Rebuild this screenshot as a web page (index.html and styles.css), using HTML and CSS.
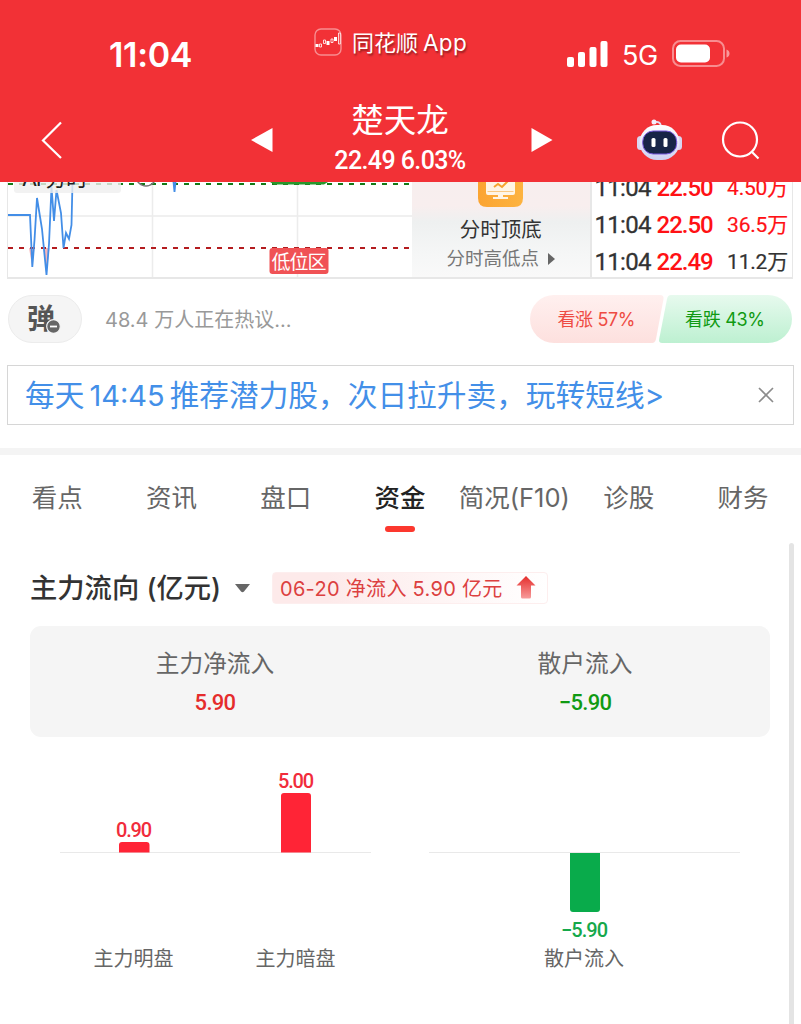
FILE: index.html
```html
<!DOCTYPE html>
<html lang="zh-CN">
<head>
<meta charset="utf-8">
<title>楚天龙 资金</title>
<link rel="stylesheet" href="styles.css">
</head>
<body>
<header class="header">
  <div class="status">
    <span class="clock">11:04</span>
    <div class="brand">
      <svg class="brand-logo" width="28" height="28" viewBox="0 0 28 28" fill="none" stroke="#fff">
        <rect x="1" y="1" width="26" height="26" rx="6" stroke-opacity=".45" stroke-width="1.4"/>
        <path d="M5.500 16h2v3h-2zM9.500 12h2v3.500h-2zM17 11h2v3.500h-2zM24.500 5h1.800v11h-1.800z" stroke-width=".8"/>
        <path d="M3 16v3M14 13v4M21.500 9v4" stroke-width="3"/>
      </svg>
      <span class="brand-name">同花顺<i>App</i></span>
    </div>
    <div class="signal">
      <svg width="42" height="27" viewBox="0 0 42 27" fill="#fff"><rect x="0" y="16" width="7" height="10" rx="2"/><rect x="11" y="11" width="7" height="15" rx="2"/><rect x="22.500" y="6" width="7" height="20" rx="2"/><rect x="33.500" y="0" width="7" height="26" rx="2"/></svg>
      <span class="net">5G</span>
      <svg class="battery" width="59" height="28" viewBox="0 0 59 28"><rect x="1" y="1" width="51" height="25" rx="7.500" fill="none" stroke="#fff" stroke-opacity=".45" stroke-width="2"/><rect x="4" y="4.500" width="34" height="18" rx="5" fill="#fff"/><path d="M54.500 9.500q3 1 3 4t-3 4z" fill="#fff" fill-opacity=".5"/></svg>
    </div>
  </div>
  <nav class="titlebar">
    <svg class="back" width="24" height="40" viewBox="0 0 24 40" fill="none" stroke="#fff" stroke-width="2.200"><path d="M21 2.500 3 20.500 21 38"/></svg>
    <svg class="prev" width="22" height="24" viewBox="0 0 22 24" fill="#fff"><path d="M0 12 21.500 0v24z"/></svg>
    <div class="stock"><h1>楚天龙</h1><p>22.49 6.03%</p></div>
    <svg class="next" width="22" height="24" viewBox="0 0 22 24" fill="#fff"><path d="M21.500 12 .5 0v24z"/></svg>
    <svg class="robot" width="46" height="42" viewBox="0 0 46 42">
      <defs><linearGradient id="shell" x2="0" y2="1"><stop stop-color="#fff"/><stop offset="1" stop-color="#cfd0f2"/></linearGradient></defs>
      <path d="M17 3.500q6-2 7 3.500" fill="none" stroke="#e3def5" stroke-width="1.800"/><circle cx="17" cy="3" r="2.500" fill="#f4eefc"/>
      <rect x="0" y="17" width="7" height="14" rx="3.500" fill="#d9d6f1"/><rect x="38" y="17" width="7" height="14" rx="3.500" fill="#d9d6f1"/>
      <rect x="2.500" y="6" width="40" height="35" rx="17.500" fill="url(#shell)"/>
      <rect x="5.700" y="12" width="34" height="23" rx="10.500" fill="#172447" stroke="#7757dc" stroke-width="1"/>
      <rect x="14.500" y="19" width="4" height="9" rx="1.500" fill="#fff"/><rect x="26.500" y="19" width="4" height="9" rx="1.500" fill="#fff"/>
    </svg>
    <svg class="search" width="40" height="40" viewBox="0 0 40 40" fill="none" stroke="#fff" stroke-width="2.200"><circle cx="19" cy="18.500" r="17"/><path d="m31 31 6.500 6.500"/></svg>
  </nav>
</header>

<section class="market">
  <svg class="trend" width="404" height="97" viewBox="8 182 404 97" fill="none">
    <path d="M8 216H412M152.500 182V279M297.500 182V279" stroke="#ececec" stroke-width="1.500"/>
    <path d="M29 248 32.300 267 34.500 248zM43.500 248 46.500 274 49.500 248z" fill="#f8b6b9"/>
    <path d="M8 184H412" stroke="#147a18" stroke-width="2" stroke-dasharray="5 6"/>
    <path d="M8 248H412" stroke="#b41c1f" stroke-width="2" stroke-dasharray="5 6"/>
    <path d="M8 215H30L32.300 267 34.500 240 37 198 42 229 46.500 275 49 244 51.500 187 54 221 56.500 190 61 213 63.500 248 66 233 69 239 71.500 225 72.500 182M173.500 182l1 10 1-10" stroke="#438ee7" stroke-width="1.800"/>
    <path d="M14 182H121V190q0 3-3 3H17q-3 0-3-3z" fill="#efefef" fill-opacity=".8"/>
    <text x="22" y="185.500" class="trend-tag" textLength="66">AI 分时</text>
    <circle cx="146" cy="176" r="10" stroke="#777" stroke-width="1.500"/>
    <path d="M270 182H328l-4 2.500H274z" fill="#29962d"/>
    <rect x="269.500" y="248" width="59" height="26" rx="3" fill="#f05255"/>
    <text x="299" y="268.500" class="low-zone" text-anchor="middle" textLength="55">低位区</text>
  </svg>
  <div class="promo">
    <svg width="45" height="25" viewBox="0 0 45 25"><defs><linearGradient id="orange"><stop stop-color="#fba431"/><stop offset="1" stop-color="#fdb340"/></linearGradient></defs><path d="M0 0H45V16q0 9-9 9H9q-9 0-9-9z" fill="url(#orange)"/><path d="M8 0H37V11q0 2-2 2H10q-2 0-2-2zM20 12h5v3h5v2H15v-2h5z" fill="#fff5e5"/><path d="m16 5 4-3 4 3 6-6" fill="none" stroke="#f5a32f" stroke-width="2"/><path d="M9.500 9.500h26" stroke="#f9c983"/></svg>
    <strong>分时顶底</strong>
    <span>分时高低点<svg width="7" height="12" viewBox="0 0 7 12"><path d="M0 0v12l7-6z" fill="#666"/></svg></span>
  </div>
  <div class="ticks">
    <div class="tick"><span>11:04</span><b>22.50</b><em class="up">4.50万</em></div>
    <div class="tick"><span>11:04</span><b>22.50</b><em class="up">36.5万</em></div>
    <div class="tick"><span>11:04</span><b>22.49</b><em>11.2万</em></div>
  </div>
</section>

<section class="talk">
  <div class="danmu"><span>弹</span><svg width="15" height="15" viewBox="0 0 15 15"><circle cx="7.500" cy="7.500" r="6.800" fill="#666" stroke="#f4f4f4" stroke-width="1.200"/><path d="M4 7.500h7" stroke="#fff" stroke-width="1.800"/></svg></div>
  <p class="talk-hint">48.4 万人正在热议...</p>
  <div class="votes">
    <svg width="262" height="48" viewBox="0 0 262 48">
      <defs><linearGradient id="pink" x2="0" y2="1"><stop stop-color="#fff0ef"/><stop offset="1" stop-color="#fde0de"/></linearGradient><linearGradient id="mint" x2="0" y2="1"><stop stop-color="#e7faee"/><stop offset="1" stop-color="#bdf0d1"/></linearGradient></defs>
      <path d="M24 0H130q4 0 3.500 4L126 44q-.8 4-4 4H24A24 24 0 0 1 24 0z" fill="url(#pink)"/>
      <path d="M141 0H238a24 24 0 0 1 0 48H132q-3.500 0-2.800-4L137 4q.8-4 4-4z" fill="url(#mint)"/>
      <text x="27.500" y="31" textLength="78" fill="#ee4b43">看涨 57%</text>
      <text x="155" y="31" textLength="80" fill="#109a12">看跌 43%</text>
    </svg>
  </div>
</section>

<aside class="notice"><p>每天<i>14:45</i>推荐潜力股，次日拉升卖，玩转短线&gt;</p><svg width="16" height="16" viewBox="0 0 16 16"><path d="m1 1 14 14M15 1 1 15" stroke="#8c8c8c" stroke-width="1.700"/></svg></aside>

<nav class="tabs"><a>看点</a><a>资讯</a><a>盘口</a><a class="active">资金</a><a class="wide">简况(F10)</a><a>诊股</a><a>财务</a></nav>

<main class="funds">
  <div class="funds-body">
    <div class="funds-head">
      <h2>主力流向 (亿元)</h2>
      <svg class="caret" width="15" height="9" viewBox="0 0 15 9"><path d="M0 0h15L9 7.500q-1.500 1.300-3 0z" fill="#666"/></svg>
      <div class="badge"><span>06-20 净流入 5.90 亿元</span><svg width="20" height="23" viewBox="0 0 20 23"><defs><linearGradient id="arrow" x2="0" y2="1"><stop stop-color="#e52d2b"/><stop offset="1" stop-color="#f79b9b"/></linearGradient></defs><path d="M10 0 19.500 9.500H15V21q0 1.500-1.500 1.500h-7Q5 22.500 5 21V9.500H.5z" fill="url(#arrow)"/></svg></div>
    </div>
    <div class="summary">
      <div><span>主力净流入</span><b class="in">5.90</b></div>
      <div><span>散户流入</span><b class="out">−5.90</b></div>
    </div>
    <svg class="bars" width="740" height="240" viewBox="30 750 740 240" text-anchor="middle">
      <path d="M60 852.500H371M429 852.500H740" stroke="#e9e9e9"/>
      <path d="M119 852.500V845q0-3 3-3H146.500q3 0 3 3V852.500zM281 852.500V796q0-3 3-3H308q3 0 3 3V852.500z" fill="#ff2436"/>
      <path d="M570 853H600V909q0 3-3 3H573q-3 0-3-3z" fill="#09ab4b"/>
      <g class="bar-value"><text x="134" y="836.500" textLength="36">0.90</text><text x="296" y="787.500" textLength="36">5.00</text><text x="584.500" y="936.500" textLength="47" class="bar-out">−5.90</text></g>
      <g class="bar-name"><text x="133.500" y="966" textLength="80">主力明盘</text><text x="295.500" y="966" textLength="80">主力暗盘</text><text x="584" y="966" textLength="80">散户流入</text></g>
    </svg>
  </div>
  <div class="scroll-thumb"></div>
</main>
</body>
</html>
```

FILE: styles.css
```css
* { box-sizing: border-box; margin: 0; padding: 0; }
body { width: 801px; height: 1024px; overflow: hidden; background: #fff; color: #333; font-family: Inter, "Noto Sans CJK SC", sans-serif; }
svg { display: block; flex: none; }
i, em { font-style: normal; }
.header { height: 182px; background: #f23136; color: #fff; }
.status { display: flex; align-items: flex-start; height: 90px; padding-left: 109px; }
.clock { width: 205px; padding-top: 35px; font-size: 34px; line-height: 40px; font-weight: 600; letter-spacing: -.3px; }
.brand { display: flex; width: 253px; padding-top: 28px; }
.brand-name { display: flex; gap: 5px; padding-left: 10px; font-size: 22px; line-height: 30px; text-shadow: 1px 2px 2px #0006; white-space: nowrap; }
.brand-name i { font-size: 22.500px; letter-spacing: .3px; }
.signal { display: flex; padding-top: 41px; }
.net { width: 50px; padding-left: 13px; font-size: 27px; line-height: 29px; letter-spacing: -.5px; }
.battery { margin: -1px 0 0 13px; }
.titlebar { display: flex; align-items: flex-start; height: 92px; padding-left: 40px; }
.back { margin-top: 30px; }
.prev { margin: 38px 0 0 187px; }
.stock { width: 160px; margin: 6px 51px 0 47px; text-align: center; }
.stock h1 { font-size: 32.500px; line-height: 50px; font-weight: 400; }
.stock p { font: 500 25px/30px Roboto, sans-serif; letter-spacing: -.6px; white-space: nowrap; }
.next { margin-top: 38px; }
.robot { margin: 29px 0 0 84px; }
.search { margin: 31px 0 0 38px; }

.market { display: flex; width: 786px; height: 97px; margin-left: 7px; border: solid #e7e7e7; border-width: 0 1px 2px; overflow: hidden; }
.trend-tag { font-size: 22px; fill: #222; }
.low-zone { font-size: 19px; fill: #fff; }
.promo { display: flex; flex-direction: column; align-items: center; width: 178px; background: linear-gradient(#f7eeee 0, #f8eeee 25%, #eef0f0 42%, #f5f6f6 75%, #f9f9f9 100%); }
.promo strong { margin-top: 7px; font-size: 20.500px; line-height: 32px; font-weight: 400; }
.promo span { display: flex; align-items: center; gap: 9px; font-size: 18.500px; line-height: 25px; color: #777; }
.ticks { width: 203px; padding-left: 3px; border-left: 2px solid #e7e7e7; }
.tick { display: grid; grid-template-columns: 62px 60px 1fr; height: 37px; font: 24px/37px Roboto, "Noto Sans CJK SC", sans-serif; letter-spacing: -.6px; white-space: nowrap; }
.tick:first-child { margin-top: -12px; }
.tick span { letter-spacing: -.7px; -webkit-text-stroke: .3px; }
.tick b { font-weight: 500; color: #ff1115; letter-spacing: -1px; }
.tick em { padding-right: 4px; font-size: 21px; text-align: right; letter-spacing: -.2px; -webkit-text-stroke: .2px; }
.tick .up { color: #ff1115; }

.talk { display: flex; align-items: center; height: 48px; margin: 16px 9px 0 8px; }
.danmu { display: flex; align-items: center; width: 74px; height: 48px; padding-left: 18px; border: 1px solid #ececec; border-radius: 24px; background: #f5f5f5; }
.danmu span { font-size: 28px; line-height: 40px; font-weight: 700; color: #555; }
.danmu svg { margin: 15px 0 0 -9px; }
.talk-hint { width: 425px; padding: 0 0 2px 23px; font-size: 20px; color: #999; }
.votes { margin-left: 23px; font-size: 18px; }

.notice { display: flex; align-items: center; justify-content: space-between; width: 787px; height: 60px; margin: 22px 0 0 7px; padding: 0 19px 0 17px; border: 1px solid #d6d6d6; }
.notice p { font-size: 29.700px; line-height: 58px; color: #438fe8; white-space: nowrap; }
.notice i { margin: 0 5px; font-size: 29px; }

.tabs { display: grid; grid-template-columns: repeat(7, 114.300px); height: 95px; margin-top: 23px; padding-top: 8px; border-top: 7px solid #f4f4f4; font-size: 25.500px; line-height: 70px; color: #666; text-align: center; white-space: nowrap; }
.tabs a { display: flex; flex-direction: column; align-items: center; }
.tabs .active { color: #222; font-weight: 500; }
.tabs .active::after { content: ""; width: 30px; height: 6px; margin-top: -7px; border-radius: 3px; background: #fc382e; }

.funds { display: flex; height: 481px; }
.funds-body { width: 789px; padding: 28px 19px 0 30px; }
.funds-head { display: flex; align-items: center; height: 33px; }
.funds-head h2 { width: 205px; padding-top: 3px; font-size: 27.300px; line-height: 32px; font-weight: 500; white-space: nowrap; }
.caret { margin-top: 1px; }
.badge { display: flex; align-items: center; justify-content: space-between; width: 276px; height: 32px; margin-left: 22px; padding: 0 11px 0 7px; border: 1px solid #fdeeee; border-radius: 4px; background: linear-gradient(90deg, #fdeaea 20%, #fff); font-size: 20px; letter-spacing: .3px; color: #dc4040; white-space: nowrap; }
.summary { display: grid; grid-template-columns: 1fr 1fr; height: 111px; margin-top: 22px; padding-top: 20px; border-radius: 11px; background: #f5f5f5; text-align: center; }
.summary span { display: block; font-size: 23.700px; line-height: 36px; color: #666; }
.summary b { display: block; font: 500 22px/42px Roboto, sans-serif; letter-spacing: -.7px; }
.summary .in { color: #e52c2c; }
.summary .out { color: #109a12; }
.bars { margin-top: 13px; }
.bar-value { font: 500 20px Roboto, sans-serif; fill: #f12c3b; }
.bar-value .bar-out { fill: #15a84b; }
.bar-name { font-size: 20px; fill: #666; }
.scroll-thumb { width: 5px; height: 481px; border-radius: 3px 3px 0 0; background: #e4e4e4; }
```
